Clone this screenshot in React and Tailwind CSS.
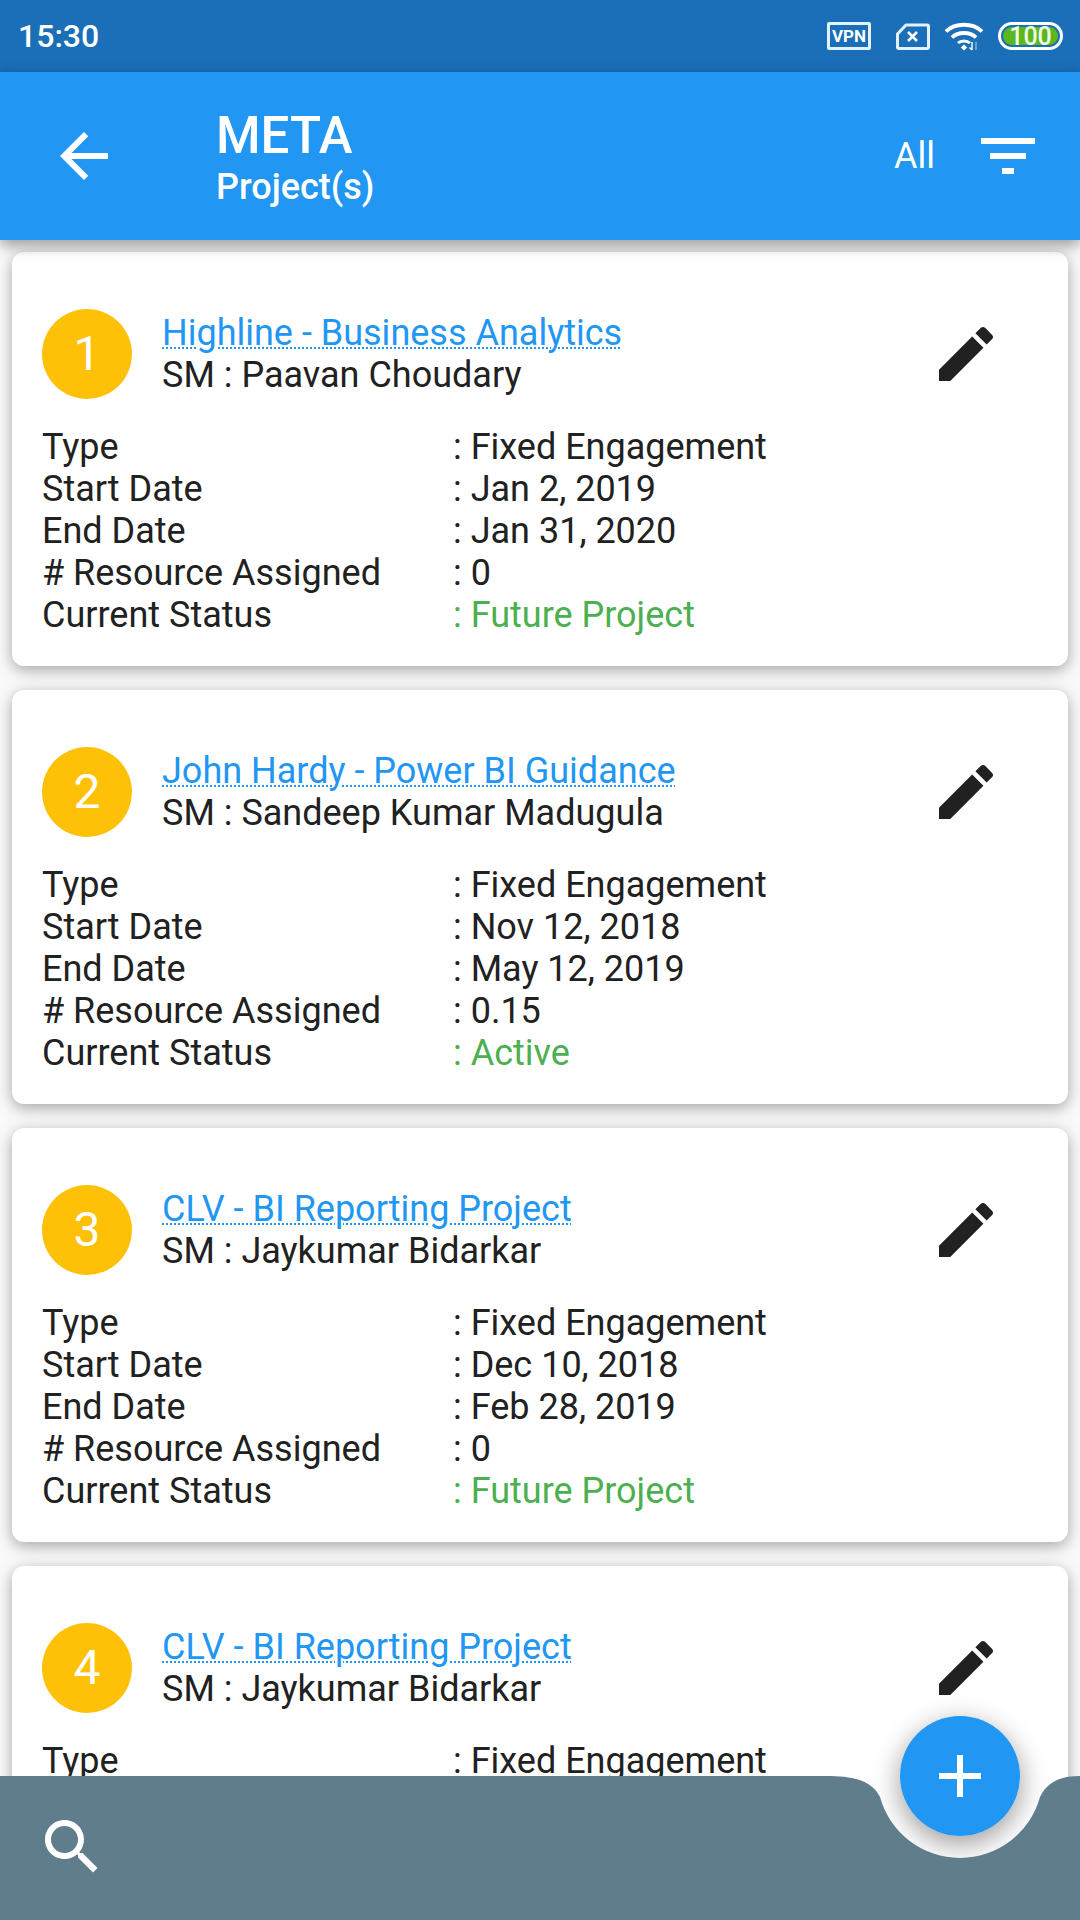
import React from 'react';

const projects = [
  { id: 1, name: 'Highline - Business Analytics', sm: 'Paavan Choudary', start: 'Jan 2, 2019', end: 'Jan 31, 2020', resource: '0', status: 'Future Project' },
  { id: 2, name: 'John Hardy - Power BI Guidance', sm: 'Sandeep Kumar Madugula', start: 'Nov 12, 2018', end: 'May 12, 2019', resource: '0.15', status: 'Active' },
  { id: 3, name: 'CLV - BI Reporting Project', sm: 'Jaykumar Bidarkar', start: 'Dec 10, 2018', end: 'Feb 28, 2019', resource: '0', status: 'Future Project' },
  { id: 4, name: 'CLV - BI Reporting Project', sm: 'Jaykumar Bidarkar', start: 'Dec 10, 2018', end: 'Feb 28, 2019', resource: '0', status: 'Future Project' },
];

const Icon = ({ d, className }) => (
  <svg viewBox="0 0 24 24" className={className} fill="currentColor">
    <path d={d} />
  </svg>
);

const StatusBar = () => (
  <div className="h-[72px] shrink-0 bg-[#1a6fb8] flex items-center justify-between pl-[18px] pr-[17px] text-white">
    <span className="text-[32px] font-medium leading-none">15:30</span>
    <div className="flex items-center">
      <div className="w-[44px] h-[28px] border-[3px] border-[#e3f2fd] rounded-[2px] flex items-center justify-center text-[17px] font-bold leading-none">VPN</div>
      <svg viewBox="0 0 34 27" className="w-[34px] h-[27px] ml-[25px]" fill="none" stroke="#e3f2fd" strokeWidth="3" strokeLinejoin="round">
        <path d="M10 2H31a1.5 1.5 0 0 1 1.5 1.5V24a1.5 1.5 0 0 1-1.5 1.5H3A1.5 1.5 0 0 1 1.5 24V11z" />
        <path d="M12 9l9 9M21 9l-9 9" strokeWidth="2.6" stroke="#ffffff" />
      </svg>
      <svg viewBox="0 0 40 30" className="w-[40px] h-[30px] ml-[14px]" fill="none" stroke="#ffffff" strokeWidth="3.8">
        <path d="M2 10.5C11 1.5 29 1.5 38 10.5" />
        <path d="M8 16.5C14 10.5 26 10.5 32 16.5" />
        <path d="M14 22C17 19.2 23 19.2 26 22" strokeWidth="3" />
        <path d="M20 23.5l3.2 3-3.2 3-3.2-3z" fill="#ffffff" stroke="none" />
        <path d="M28 21v8M25.5 26.5l2.5 2.5" strokeWidth="1.4" />
        <path d="M32 21v8" strokeWidth="1.4" stroke="#8fb8dc" />
      </svg>
      <div className="w-[65px] h-[28px] ml-[14px] border-[3px] border-white rounded-full p-[2px] flex">
        <div className="flex-1 rounded-full bg-[#5ab81c] flex items-center justify-center text-[25px] font-medium leading-none text-[#f1f8e9]">100</div>
      </div>
    </div>
  </div>
);

const AppBar = () => (
  <div className="h-[168px] shrink-0 bg-[#2196f3] text-white flex items-center relative z-10 shadow-[0_5px_14px_rgba(0,0,0,0.4)]">
    <Icon d="M20 11H7.83l5.59-5.59L12 4l-8 8 8 8 1.41-1.41L7.83 13H20v-2z" className="w-[72px] h-[72px] ml-[48px]" />
    <div className="ml-[96px] pt-[2px] flex-1 flex flex-col">
      <span className="text-[51px] font-medium leading-[56px]">META</span>
      <span className="text-[36px] font-medium leading-[40px] mt-[3px]">Project(s)</span>
    </div>
    <span className="text-[36px] leading-none">All</span>
    <Icon d="M10 18h4v-2h-4v2zM3 6v2h18V6H3zm3 7h12v-2H6v2z" className="w-[72px] h-[72px] ml-[37px] mr-[36px]" />
  </div>
);

const Row = ({ label, value, green }) => (
  <div className="flex">
    <span className="w-[411px]">{label}</span>
    <span className={green ? 'text-[#4caf50]' : ''}>: {value}</span>
  </div>
);

const ProjectCard = ({ project }) => (
  <div className="shrink-0 h-[414px] bg-white rounded-[12px] shadow-[0_4px_16px_rgba(0,0,0,0.35)] pt-[57px] px-[30px] text-[#212121] text-[36px] leading-[42px]">
    <div className="flex items-center">
      <div className="w-[90px] h-[90px] rounded-full bg-[#ffc107] text-white text-[48px] flex items-center justify-center">{project.id}</div>
      <div className="ml-[30px] flex-1">
        <div className="text-[#2196f3] underline decoration-dotted decoration-2 underline-offset-[2px]">{project.name}</div>
        <div>SM : {project.sm}</div>
      </div>
      <Icon d="M3 17.25V21h3.75L17.81 9.94l-3.75-3.75L3 17.25zM20.71 7.04c.39-.39.39-1.02 0-1.41l-2.34-2.34c-.39-.39-1.02-.39-1.41 0l-1.83 1.83 3.75 3.75 1.83-1.83z" className="w-[72px] h-[72px] mr-[36px]" />
    </div>
    <div className="mt-[27px]">
      <Row label="Type" value="Fixed Engagement" />
      <Row label="Start Date" value={project.start} />
      <Row label="End Date" value={project.end} />
      <Row label="# Resource Assigned" value={project.resource} />
      <Row label="Current Status" value={project.status} green />
    </div>
  </div>
);

const BottomBar = () => (
  <div className="absolute left-0 bottom-0 w-[1080px] h-[144px] z-20">
    {/* shadow of the button goes under the bar, it only shows in the notch */}
    <div className="absolute left-[900px] top-[-60px] w-[120px] h-[120px] rounded-full shadow-[0_8px_28px_rgba(0,0,0,0.4)]" />
    <svg viewBox="0 0 1080 144" className="absolute inset-0 w-full h-full">
      <path
        d="M0 0H826C852 0 872 4 880 21A83 83 0 0 0 1040 21C1048 4 1064 0 1080 0V144H0Z"
        fill="#607d8b"
      />
    </svg>
    <Icon d="M15.5 14h-.79l-.28-.27C15.41 12.59 16 11.11 16 9.5 16 5.91 13.09 3 9.5 3S3 5.91 3 9.5 5.91 16 9.5 16c1.61 0 3.09-.59 4.23-1.57l.27.28v.79l5 4.99L20.49 19l-4.99-5zm-6 0C7.01 14 5 11.99 5 9.5S7.01 5 9.5 5 14 7.01 14 9.5 11.99 14 9.5 14z" className="absolute left-[36px] top-[35px] w-[72px] h-[72px] text-white" />
    <div className="absolute left-[900px] top-[-60px] w-[120px] h-[120px] rounded-full bg-[#2196f3] text-white flex items-center justify-center">
      <Icon d="M19 13h-6v6h-2v-6H5v-2h6V5h2v6h6v2z" className="w-[72px] h-[72px]" />
    </div>
  </div>
);

const App = () => {
  return (
    <div className="relative w-[1080px] h-[1920px] overflow-hidden bg-[#fafafa] flex flex-col font-['Roboto',sans-serif]">
      <StatusBar />
      <AppBar />
      <div className="flex flex-col gap-[24px] pt-[12px] px-[12px]">
        {projects.map((p) => (
          <ProjectCard key={p.id} project={p} />
        ))}
      </div>
      <BottomBar />
    </div>
  );
};

export default App;
